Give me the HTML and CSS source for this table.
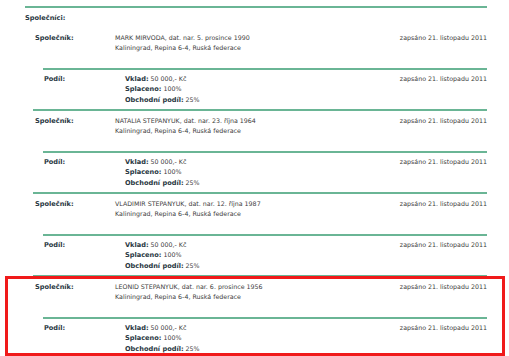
FILE: index.html
```html
<!DOCTYPE html>
<html lang="cs">
<head>
<meta charset="utf-8">
<title>Společníci</title>
<link rel="stylesheet" href="styles.css">
</head>
<body>
<div class="section">
  <div class="section-title">Společníci:</div>

  <div class="partner">
    <div class="row row-main">
      <div class="label">Společník:</div>
      <div class="value">MARK MIRVODA, dat. nar. 5. prosince 1990<br>Kaliningrad, Repina 6-4, Ruská federace</div>
      <div class="date">zapsáno 21. listopadu 2011</div>
    </div>
    <div class="row share">
      <div class="label label-share">Podíl:</div>
      <div class="value"><b>Vklad:</b> 50 000,- Kč<br><b>Splaceno:</b> 100%<br><b>Obchodní podíl:</b> 25%</div>
      <div class="date">zapsáno 21. listopadu 2011</div>
    </div>
  </div>

  <div class="partner">
    <div class="row row-main">
      <div class="label">Společník:</div>
      <div class="value">NATALIA STEPANYUK, dat. nar. 23. října 1964<br>Kaliningrad, Repina 6-4, Ruská federace</div>
      <div class="date">zapsáno 21. listopadu 2011</div>
    </div>
    <div class="row share">
      <div class="label label-share">Podíl:</div>
      <div class="value"><b>Vklad:</b> 50 000,- Kč<br><b>Splaceno:</b> 100%<br><b>Obchodní podíl:</b> 25%</div>
      <div class="date">zapsáno 21. listopadu 2011</div>
    </div>
  </div>

  <div class="partner">
    <div class="row row-main">
      <div class="label">Společník:</div>
      <div class="value">VLADIMIR STEPANYUK, dat. nar. 12. října 1987<br>Kaliningrad, Repina 6-4, Ruská federace</div>
      <div class="date">zapsáno 21. listopadu 2011</div>
    </div>
    <div class="row share">
      <div class="label label-share">Podíl:</div>
      <div class="value"><b>Vklad:</b> 50 000,- Kč<br><b>Splaceno:</b> 100%<br><b>Obchodní podíl:</b> 25%</div>
      <div class="date">zapsáno 21. listopadu 2011</div>
    </div>
  </div>

  <div class="partner highlight">
    <div class="row row-main">
      <div class="label">Společník:</div>
      <div class="value">LEONID STEPANYUK, dat. nar. 6. prosince 1956<br>Kaliningrad, Repina 6-4, Ruská federace</div>
      <div class="date">zapsáno 21. listopadu 2011</div>
    </div>
    <div class="row share">
      <div class="label label-share">Podíl:</div>
      <div class="value"><b>Vklad:</b> 50 000,- Kč<br><b>Splaceno:</b> 100%<br><b>Obchodní podíl:</b> 25%</div>
      <div class="date">zapsáno 21. listopadu 2011</div>
    </div>
  </div>
</div>
</body>
</html>
```

FILE: styles.css
```css
html, body {
  margin: 0;
  padding: 0;
  background: #ffffff;
  overflow: hidden;
}

body {
  font-family: "DejaVu Sans", Verdana, sans-serif;
  font-size: 6.3px;
  line-height: 10.5px;
  color: #3c3c3c;
}

b,
.label,
.section-title {
  font-weight: bold;
  font-size: 6.6px;
  color: #2a3843;
}

.section {
  margin: 6px 0 0 25px;
  width: 462px;
  border-top: 2px solid #6ab595;
}

.section-title {
  padding: 5px 0 2px 0;
}

.partner {
  position: relative;
  margin-left: 8px;
  border-top: 2px solid #6ab595;
}

.partner:nth-of-type(2) {
  border-top-color: transparent;
}

.row {
  display: flex;
  align-items: flex-start;
}

.row-main {
  padding: 5px 0 14px 2px;
}

.share {
  margin-left: 10px;
  border-top: 2px solid #6ab595;
  padding: 4px 0 3.5px 1px;
}

.label {
  flex: none;
  width: 80px;
}

.label-share {
  width: 81px;
}

.value {
  flex: 1;
}

.date {
  flex: none;
  text-align: right;
}

.highlight::after {
  content: "";
  position: absolute;
  left: -28px;
  right: -18px;
  top: -1px;
  bottom: 1.5px;
  border: 3px solid #f01a1a;
  pointer-events: none;
}
```
